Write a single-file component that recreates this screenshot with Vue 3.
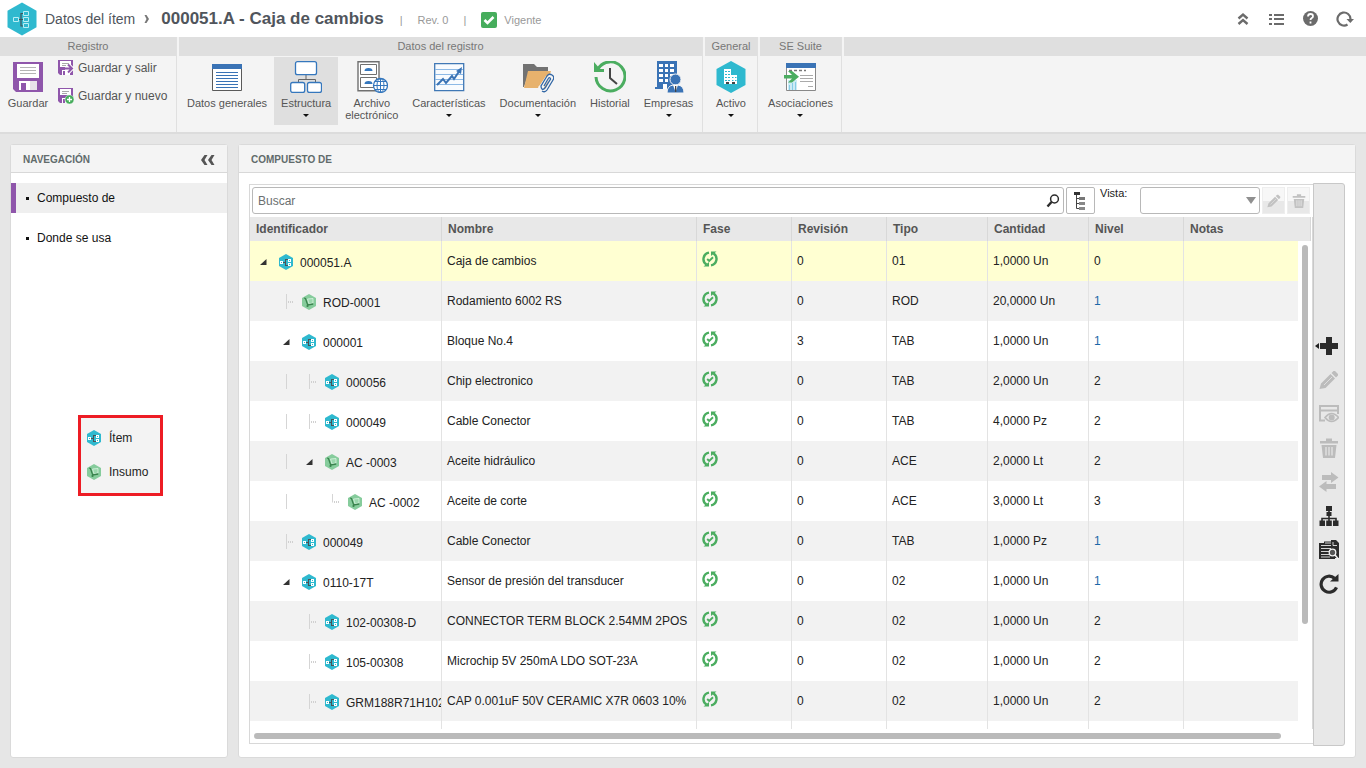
<script setup>
import { ref } from 'vue'

const sections = [
  {
    id: 'datos',
    title: 'Datos del registro',
    items: [
      { icon: 'form', label: 'Datos generales' },
      { icon: 'structure', label: 'Estructura', menu: true, active: true },
      { icon: 'cabinet', label: 'Archivo electrónico', narrow: true },
      { icon: 'chart', label: 'Características', menu: true },
      { icon: 'folder', label: 'Documentación', menu: true },
      { icon: 'history', label: 'Historial' },
      { icon: 'company', label: 'Empresas', menu: true }
    ]
  },
  { id: 'general', title: 'General', items: [{ icon: 'asset', label: 'Activo', menu: true }] },
  { id: 'suite', title: 'SE Suite', items: [{ icon: 'link', label: 'Asociaciones', menu: true }] }
]

const columns = ['Identificador', 'Nombre', 'Fase', 'Revisión', 'Tipo', 'Cantidad', 'Nivel', 'Notas']

const rows = [
  { tree: ['open'], kind: 'item', id: '000051.A', name: 'Caja de cambios', rev: '0', type: '01', qty: '1,0000 Un', level: '0', selected: true },
  { tree: ['none', 'tee'], kind: 'supply', id: 'ROD-0001', name: 'Rodamiento 6002 RS', rev: '0', type: 'ROD', qty: '20,0000 Un', level: '1' },
  { tree: ['none', 'open'], kind: 'item', id: '000001', name: 'Bloque No.4', rev: '3', type: 'TAB', qty: '1,0000 Un', level: '1' },
  { tree: ['none', 'line', 'tee'], kind: 'item', id: '000056', name: 'Chip electronico', rev: '0', type: 'TAB', qty: '2,0000 Un', level: '2' },
  { tree: ['none', 'line', 'tee'], kind: 'item', id: '000049', name: 'Cable Conector', rev: '0', type: 'TAB', qty: '4,0000 Pz', level: '2' },
  { tree: ['none', 'line', 'open'], kind: 'supply', id: 'AC -0003', name: 'Aceite hidráulico', rev: '0', type: 'ACE', qty: '2,0000 Lt', level: '2' },
  { tree: ['none', 'line', 'none', 'elbow'], kind: 'supply', id: 'AC -0002', name: 'Aceite de corte', rev: '0', type: 'ACE', qty: '3,0000 Lt', level: '3' },
  { tree: ['none', 'tee'], kind: 'item', id: '000049', name: 'Cable Conector', rev: '0', type: 'TAB', qty: '1,0000 Pz', level: '1' },
  { tree: ['none', 'open'], kind: 'item', id: '0110-17T', name: 'Sensor de presión del transducer', rev: '0', type: '02', qty: '1,0000 Un', level: '1' },
  { tree: ['none', 'none', 'tee'], kind: 'item', id: '102-00308-D', name: 'CONNECTOR TERM BLOCK 2.54MM 2POS', rev: '0', type: '02', qty: '1,0000 Un', level: '2' },
  { tree: ['none', 'none', 'tee'], kind: 'item', id: '105-00308', name: 'Microchip 5V 250mA LDO SOT-23A', rev: '0', type: '02', qty: '1,0000 Un', level: '2' },
  { tree: ['none', 'none', 'tee'], kind: 'item', id: 'GRM188R71H102', name: 'CAP 0.001uF 50V CERAMIC X7R 0603 10%', rev: '0', type: '02', qty: '1,0000 Un', level: '2' }
]

const tools = [
  { icon: 'plus', label: 'Agregar', menu: true },
  { icon: 'pencil', label: 'Editar', off: true },
  { icon: 'view', label: 'Visualizar', off: true },
  { icon: 'trash', label: 'Eliminar', off: true },
  { icon: 'swap', label: 'Reemplazar', off: true },
  { icon: 'org', label: 'Organigrama' },
  { icon: 'report', label: 'Informe' },
  { icon: 'reload', label: 'Actualizar' }
]

const search = ref('')
const view = ref('')
</script>

<template>
  <div class="page">
    <svg class="sprite" width="0" height="0" aria-hidden="true">
      <symbol id="item-big" viewBox="0 0 30 34">
        <path d="M15 0.5 29.5 8.8V25.2L15 33.500 0.5 25.200V8.800Z" fill="#2fb9cf" />
        <path d="M12 17.500h4M16.500 11.500H14v12.500h2.500" fill="none" stroke="#41545b" stroke-width="1.200" />
        <path d="M6.500 15.500h5v4h-5zM16.500 9.500h5v4h-5zM16.500 15.500h5v4h-5zM16.500 21.500h5v4h-5z" fill="none" stroke="#b9eef5" />
      </symbol>
      <symbol id="item" viewBox="0 0 16 16">
        <path d="M8 0 15 4V12L8 16 1 12V4Z" fill="#2fb9cf" />
        <path d="M5 8h2v1H5zM7 5h3v1H8v5h2v1H7z" fill="#4a5156" />
        <path d="M2 7h3v3H2zM10 5h3v3h-3zM10 9h3v3h-3z" fill="#fff" />
        <path d="M3 8h1v1H3zM11 6h1v1h-1zM11 10h1v1h-1z" fill="#2fb9cf" />
      </symbol>
      <symbol id="supply" viewBox="0 0 16 16">
        <path d="M8 0 15 4V12L8 16 1 12V4Z" fill="#86cc9c" />
        <path d="M6.500 5 12 4.500v4.500L8 9.800Z" fill="#9ad8ad" stroke="#daf3e1" stroke-width=".8" />
        <path d="M3 4 4.500 4.500l2.200 6.500 5.500-1" fill="none" stroke="#39834d" stroke-width="1.300" />
        <circle cx="6.500" cy="12" r="1.100" fill="#39834d" />
      </symbol>
      <symbol id="save" viewBox="0 0 30 30">
        <path d="M0 0h30v30H3l-3-3z" fill="#8f56ab" />
        <path d="M4 2h22v14H4zM6 19h18v9H6z" fill="#fff" />
        <path d="M7 5.500h16M7 8.500h16M7 11.500h16" stroke="#b5b5b5" />
        <path d="M8 21h5v7H8z" fill="#8f56ab" />
        <path d="M17 19h7v9h-7z" fill="#e8e3ea" />
      </symbol>
      <symbol id="save-exit" viewBox="0 0 16 16">
        <path d="M0 0h15v15H2l-2-2z" fill="#8f56ab" />
        <path d="M2 1h11v6H2zM4 10h8v5H4z" fill="#fff" />
        <path d="M4 3.500h7M4 5.500h4" stroke="#aaa" />
        <path d="M5 11h2v4H5z" fill="#8f56ab" />
        <path d="M7 8.500h6M10 4.500l4 4-4 4" fill="none" stroke="#fff" stroke-width="4" />
        <path d="M7 8.500h6M10 4.500l4 4-4 4" fill="none" stroke="#8f56ab" stroke-width="2" />
      </symbol>
      <symbol id="save-new" viewBox="0 0 16 16">
        <path d="M0 0h15v15H2l-2-2z" fill="#8f56ab" />
        <path d="M2 1h11v6H2zM4 10h8v5H4z" fill="#fff" />
        <path d="M4 3.500h7M4 5.500h5" stroke="#aaa" />
        <path d="M5 11h2v4H5z" fill="#8f56ab" />
        <circle cx="11.500" cy="11.500" r="4.500" fill="#46ad5c" stroke="#e8f6eb" stroke-width=".5" />
        <path d="M9 11.500h5M11.500 9v5" stroke="#fff" stroke-width="1.300" />
      </symbol>
      <symbol id="form" viewBox="0 0 32 32">
        <path d="M1.500 3.500h29v26h-29z" fill="#fff" stroke="#5a5a5a" />
        <path d="M1 3h30v5H1z" fill="#3a73b5" />
        <path d="M5 11.500h22M5 14.500h22M5 17.500h22M5 20.500h22M5 23.500h22M5 26.500h22" stroke="#3a73b5" />
      </symbol>
      <symbol id="structure" viewBox="0 0 32 32">
        <path d="M16 13v5M8.500 21v-2.500h17V21" fill="none" stroke="#666" />
        <g fill="#fff" stroke="#3577bd" stroke-width="1.300"><rect x="5.500" y=".7" width="21" height="13" rx="2" /><rect x=".7" y="21.500" width="14" height="10" rx="2" /><rect x="17.500" y="21.500" width="14" height="10" rx="2" /></g>
      </symbol>
      <symbol id="cabinet" viewBox="0 0 32 32">
        <g fill="#fff" stroke="#707070"><path d="M2 .8h21v29H2z" stroke-width="1.400" /><path d="M4.500 3.500h16v10h-16zM4.500 16.500h16v10h-16z" /></g>
        <path d="M8.500 10q0-3 4-3t4 3zM8.500 23q0-3 4-3t4 3z" fill="#3577bd" />
        <circle cx="24.500" cy="24.500" r="7" fill="#fff" stroke="#3577bd" stroke-width="1.300" />
        <path d="M17.500 24.500h14M24.500 17.500v14M19 20.500h11M19 28.500h11" stroke="#3577bd" />
        <ellipse cx="24.500" cy="24.500" rx="3.500" ry="7" fill="none" stroke="#3577bd" />
      </symbol>
      <symbol id="chart" viewBox="0 0 32 32">
        <path d="M1.700 2.700h29v27h-29z" fill="#f8fbfe" stroke="#4078b5" stroke-width="1.300" />
        <path d="M2 8.500h28M2 13.500h28M2 18.500h28M2 23.500h28" stroke="#8cb9e6" />
        <path d="m4 24 6-6 3 4 6-7 2 3 6-9" fill="none" stroke="#3a73b5" stroke-width="2" />
        <path d="m29 6-1 7-5-3z" fill="#3a73b5" />
      </symbol>
      <symbol id="folder" viewBox="0 0 32 32">
        <path d="M1 3h11l3 3h11v5H7L2 26H1z" fill="#727272" />
        <path d="M6 10h23l-5 17H2z" fill="#e7b26d" />
        <g fill="none" stroke="#f5f5f5" stroke-width="3"><path d="m20 27 6-10q3-4 5-1t-1 5l-5 8q-3 4-6 1t0-5l6-9" /></g>
        <path d="m22 25 4-7q1-2 2-1t0 2l-5 8q-2 2-3 1t-1-3l6-10q2-3 5-1t1 5l-6 10q-2 3-5 1" fill="none" stroke="#3267a5" stroke-width="1.300" />
      </symbol>
      <symbol id="history" viewBox="0 0 32 32">
        <path d="M4 8a14.500 14.500 0 1 1-2 8" fill="none" stroke="#4bad60" stroke-width="3" />
        <path d="M0 1v10h10v-3H6z" fill="#4bad60" />
        <path d="M16 7v10l7 6" fill="none" stroke="#454545" stroke-width="2" />
      </symbol>
      <symbol id="company" viewBox="0 0 32 32">
        <path d="M4 0h20v28H2v-2h2z" fill="#3a73b5" />
        <path d="M6 3h4v3H6zm6 0h3v3h-3zm5 0h4v3h-4zM6 8h4v3H6zm6 0h3v3h-3zm5 0h4v3h-4zM6 13h4v3H6zm6 0h3v3h-3zm5 0h4v2h-4zM6 18h4v3H6zm6 0h3v3h-3zM10 23h4v5h-4z" fill="#fff" />
        <circle cx="22.500" cy="18.500" r="5.500" fill="#3a73b5" stroke="#f4f4f4" />
        <path d="M14 32q0-7 6-8h5q6 1 6 8z" fill="#3a73b5" stroke="#f4f4f4" />
        <path d="m20 24 2.500 7 2.500-7z" fill="#fff" /><path d="M22 25h1.300v6H22z" fill="#444" />
      </symbol>
      <symbol id="asset" viewBox="0 0 32 32">
        <path d="M16 0 30.500 8V24L16 32 1.500 24V8Z" fill="#2fb9cf" />
        <path d="M9 8h7v6h6v9H9z" fill="#fff" />
        <path d="M10 10h2v1h-2zm3 0h2v1h-2zM10 13h2v1h-2zm3 0h2v1h-2zM10 16h2v1h-2zm3 0h2v1h-2zm4 0h1.500v1H17zm3 0h1.500v1H20zM10 19h2v1h-2zm3 0h2v1h-2zm4 0h1.500v1H17zm3 0h1.500v1H20z" fill="#2fb9cf" />
        <path d="M11 21h3v2h-3zm6 0h3v2h-3z" fill="#444" />
      </symbol>
      <symbol id="link" viewBox="0 0 32 32">
        <path d="M2.500 2.500h29v27h-29z" fill="#fff" stroke="#888" />
        <path d="M2 2h30v5H2z" fill="#3a73b5" />
        <path d="M5 9.500h17" stroke="#777" stroke-width="1.500" stroke-dasharray="3 2" />
        <path d="M4 19h9v10H4z" fill="#ccebf5" /><path d="M5.500 29v-5M8.500 29v-7M11.500 29v-8" stroke="#86cce6" />
        <path d="M16 14.500h13M16 17.500h13M16 20.500h13M24 25.500h5" stroke="#aaa" />
        <path d="M0 14h8l-4-4h4l7 5.700-7 5.800H4l4-4H0z" fill="#4bad60" />
      </symbol>
      <symbol id="fase" viewBox="0 0 16 16">
        <path d="M7 1.600A6.500 6.500 0 0 0 4.500 13.500M9 14.400A6.500 6.500 0 0 0 11.500 2.500" fill="none" stroke="#4bad60" stroke-width="2.400" />
        <path d="M1.500 15.500H7V11zM14.500 .5H9V5z" fill="#4bad60" />
        <path d="m5.200 8 2 1.900L11 6.200" fill="none" stroke="#4bad60" stroke-width="1.900" />
      </symbol>
      <symbol id="check" viewBox="0 0 16 16">
        <rect width="16" height="16" rx="2" fill="#46ad5c" /><path d="m3.500 8 3 3 6-6" fill="none" stroke="#fff" stroke-width="2.600" />
      </symbol>
      <symbol id="collapse" viewBox="0 0 18 18"><path d="m4.500 8.500 4.500-4 4.500 4M4.500 14 9 10l4.500 4" fill="none" stroke="currentColor" stroke-width="2.400" /></symbol>
      <symbol id="list" viewBox="0 0 18 18"><path d="M1 5h3M1 9h3M1 14h3M6 5h10M6 9h10M6 14h10" stroke="currentColor" stroke-width="2" /></symbol>
      <symbol id="help" viewBox="0 0 18 18"><circle cx="8.500" cy="8.500" r="7.500" fill="currentColor" /><path d="M6 6.500q0-2.500 2.500-2.500T11 6.200q0 1.400-1.500 2-1 .6-1 1.800M8.500 11.500v2" fill="none" stroke="#fff" stroke-width="1.800" /></symbol>
      <symbol id="refresh" viewBox="0 0 18 18"><path d="M11.500 14.500A6.500 6.500 0 1 1 14.500 9" fill="none" stroke="currentColor" stroke-width="2.200" /><path d="M10.500 9H18l-3.700 4z" fill="currentColor" /></symbol>
      <symbol id="back" viewBox="0 0 14 12"><path d="M6.500 1H3.500L0 6l3.500 5h3l-3-5zM13.500 1h-3L7 6l3.500 5h3l-3-5z" fill="#555" /></symbol>
      <symbol id="magnifier" viewBox="0 0 14 14"><circle cx="8.500" cy="5" r="3.900" fill="none" stroke="#2b2b2b" stroke-width="1.500" /><path d="m5.500 8-4 4.500" stroke="#2b2b2b" stroke-width="2.400" /></symbol>
      <symbol id="tree" viewBox="0 0 14 20">
        <path d="M2.500 3v14.500H6M2.500 7.500H6M2.500 12.500H6" fill="none" stroke="#444" />
        <path d="M0 1h6v3H0z" fill="#333" /><path d="M5 6h6v3H5z" fill="#777" /><path d="M5 11h6v3H5zM5 16h6v3H5z" fill="#888" />
      </symbol>
      <symbol id="plus" viewBox="0 0 20 20"><path d="M7 1h6v6h6v6h-6v6H7v-6H1V7h6z" fill="currentColor" /></symbol>
      <symbol id="pencil" viewBox="0 0 20 20"><path d="m.5 19 1.500-5.500L11.500 4l4.500 4.500L6.500 18zM12.500 3l2-2h1.500L19 4v1.500l-2 2z" fill="currentColor" /><path d="m5 15 8-8" stroke="#fff" stroke-opacity=".5" /></symbol>
      <symbol id="view" viewBox="0 0 20 20"><path d="M6 16.500H1V2h18v8M1 6.500h18" fill="none" stroke="currentColor" stroke-width="2" /><path d="M6 13.500q6.500-8 13.500 0-7 8-13.500 0z" fill="#e8e8e8" stroke="currentColor" stroke-width="1.700" /><circle cx="12.700" cy="13.500" r="3" fill="currentColor" /></symbol>
      <symbol id="trash" viewBox="0 0 20 20"><path d="M1 3h6V.5h6V3h6v2.500H1zM2.500 7h15L16 20H4z" fill="currentColor" /><path d="M7 9v8.500M10 9v8.500M13 9v8.500" stroke="#e8e8e8" stroke-width="1.200" /></symbol>
      <symbol id="swap" viewBox="0 0 20 20"><path d="M3 3h9V0l7.500 5.500L12 11V8H3zM17 12H7.500V9L0 14.500 7.500 20v-3H17z" fill="currentColor" /></symbol>
      <symbol id="org" viewBox="0 0 20 20"><path d="M7 0h6v5H7zM7.500 6h5v4h-5zM.5 14.500H6V20H.5zM7.200 14.500h5.600V20H7.200zM14 14.500h5.500V20H14z" fill="currentColor" /><path d="M10 4v11M3 15v-2.500h14V15" fill="none" stroke="currentColor" stroke-width="1.600" /></symbol>
      <symbol id="report" viewBox="0 0 20 20">
        <path d="M0 3h5V1.500h7V0h5l3 3v15h-4v1H0z" fill="currentColor" />
        <path d="M2 5.500h10M2 8.500h10M2 11.500h8M2 14.500h8M2 17h9M14 2v3.500h4M6 3h6" fill="none" stroke="#e8e8e8" stroke-width=".9" />
        <circle cx="13.500" cy="12.500" r="3.300" fill="#555" stroke="#f4f4f4" stroke-width="1.300" /><path d="m16 15 3.500 4" stroke="#f4f4f4" stroke-width="1.500" />
      </symbol>
      <symbol id="reload" viewBox="0 0 20 20"><path d="M15.500 4.300a8 8 0 1 0 2 9" fill="none" stroke="currentColor" stroke-width="3.200" /><path d="M11 7.500h8.500V0z" fill="currentColor" /></symbol>
    </svg>

    <header class="topbar">
      <svg class="logo"><use href="#item-big" /></svg>
      <a class="crumb" href="#">Datos del ítem</a>
      <svg class="sep" viewBox="0 0 8 10"><path d="M1.500 1H3.500L6 5 3.500 9H1.500L3.500 5z" fill="#777" /></svg>
      <h1 class="title">000051.A - Caja de cambios</h1>
      <div class="meta">
        <span>|</span><span>Rev. 0</span><span>|</span>
        <span class="status"><svg class="i16"><use href="#check" /></svg>Vigente</span>
      </div>
      <div class="actions">
        <button v-for="a in ['collapse', 'list', 'help', 'refresh']" :key="a" type="button" :aria-label="a">
          <svg class="i18"><use :href="'#' + a" /></svg>
        </button>
      </div>
    </header>

    <div class="ribbon">
      <section class="group record">
        <h2>Registro</h2>
        <div class="tiles">
          <button class="tile" type="button">
            <svg class="i32 save"><use href="#save" /></svg><span>Guardar</span>
          </button>
          <div class="stack">
            <button type="button"><svg class="i16"><use href="#save-exit" /></svg>Guardar y salir</button>
            <button type="button"><svg class="i16"><use href="#save-new" /></svg>Guardar y nuevo</button>
          </div>
        </div>
      </section>
      <section v-for="s in sections" :key="s.id" class="group" :class="s.id">
        <h2>{{ s.title }}</h2>
        <div class="tiles">
          <button v-for="t in s.items" :key="t.label" class="tile" :class="{ active: t.active, narrow: t.narrow }" type="button">
            <svg class="i32"><use :href="'#' + t.icon" /></svg>
            <span>{{ t.label }}</span>
            <i v-if="t.menu" class="caret"></i>
          </button>
        </div>
      </section>
      <div class="group rest"><div class="fill"></div></div>
    </div>

    <main class="work">
      <aside class="panel side">
        <div class="head">
          <h2>NAVEGACIÓN</h2>
          <button type="button" aria-label="Contraer"><svg class="back"><use href="#back" /></svg></button>
        </div>
        <nav>
          <a class="current" href="#">Compuesto de</a>
          <a href="#">Donde se usa</a>
        </nav>
        <div class="legend">
          <span><svg class="i16"><use href="#item" /></svg>Ítem</span>
          <span><svg class="i16"><use href="#supply" /></svg>Insumo</span>
        </div>
      </aside>

      <section class="panel content">
        <div class="head"><h2>COMPUESTO DE</h2></div>
        <div class="body">
          <div class="box">
            <form class="filters" @submit.prevent>
              <div class="search">
                <input v-model="search" type="text" placeholder="Buscar" aria-label="Buscar" />
                <button type="submit" aria-label="Buscar"><svg class="i14"><use href="#magnifier" /></svg></button>
              </div>
              <button class="square" type="button" aria-label="Árbol"><svg class="tree"><use href="#tree" /></svg></button>
              <label for="vista">Vista:</label>
              <div class="pick">
                <select id="vista" v-model="view"><option value=""></option></select>
                <i></i>
              </div>
              <button class="ghost" type="button" disabled aria-label="Editar vista"><svg class="i14"><use href="#pencil" /></svg></button>
              <button class="ghost" type="button" disabled aria-label="Eliminar vista"><svg class="i14"><use href="#trash" /></svg></button>
            </form>

            <div class="grid">
              <table>
                <colgroup>
                  <col class="c-id" /><col class="c-name" /><col class="c-s" /><col class="c-s" />
                  <col class="c-m" /><col class="c-m" /><col class="c-s" /><col />
                </colgroup>
                <thead>
                  <tr><th v-for="c in columns" :key="c" scope="col">{{ c }}</th></tr>
                </thead>
                <tbody>
                  <tr v-for="(r, n) in rows" :key="n" :class="{ selected: r.selected }">
                    <td class="id">
                      <div class="node">
                        <svg v-for="(k, i) in r.tree" :key="i" class="slot" viewBox="0 0 23 16">
                          <path v-if="k === 'open'" d="M14.500 5v6H8z" fill="#333" />
                          <path v-if="k === 'line' || k === 'tee'" d="M11.500 0v15" stroke="#d5d5d5" />
                          <path v-if="k === 'tee'" d="M13 8h6" stroke="#d0d0d0" stroke-width="2" stroke-dasharray="1 1" />
                          <path v-if="k === 'elbow'" d="M11.500 0v8.500" stroke="#d5d5d5" />
                          <path v-if="k === 'elbow'" d="M13 8h6" stroke="#d0d0d0" stroke-width="2" stroke-dasharray="1 1" />
                        </svg>
                        <svg class="i16"><use :href="'#' + r.kind" /></svg>
                        <span>{{ r.id }}</span>
                      </div>
                    </td>
                    <td>{{ r.name }}</td>
                    <td class="fase"><svg class="i16"><use href="#fase" /></svg></td>
                    <td>{{ r.rev }}</td>
                    <td>{{ r.type }}</td>
                    <td>{{ r.qty }}</td>
                    <td :class="{ blue: r.level === '1' }">{{ r.level }}</td>
                    <td></td>
                  </tr>
                </tbody>
                <tfoot><tr><td v-for="c in columns" :key="c"></td></tr></tfoot>
              </table>
              <div class="gutter"><div class="cap"></div><div class="rail"><div class="thumb"></div></div></div>
            </div>
            <div class="hbar"></div>
          </div>

          <div class="tools">
            <button v-for="t in tools" :key="t.icon" type="button" :aria-label="t.label" :disabled="t.off">
              <svg v-if="t.menu" class="left" viewBox="0 0 4 6"><path d="M4 0v6L0 3z" fill="#222" /></svg>
              <svg class="i20"><use :href="'#' + t.icon" /></svg>
            </button>
          </div>
        </div>
      </section>
    </main>
  </div>
</template>

<style>
body { background: #e6e6e6; }
</style>

<style scoped>
.page { min-height: 100vh; display: flex; flex-direction: column; background: #e6e6e6; font: 12px/16px "Liberation Sans", Arial, sans-serif; color: #222; }
.page, .page *, .page *::before { box-sizing: border-box; }
.sprite { position: absolute; }
svg { display: block; flex: none; }
h1, h2 { margin: 0; }
button { padding: 0; border: 0; background: none; font: inherit; color: inherit; display: flex; align-items: center; justify-content: center; }
a { color: inherit; text-decoration: none; }
.i14 { width: 14px; height: 14px; }
.i16 { width: 16px; height: 16px; }
.i18 { width: 18px; height: 18px; }
.i20 { width: 20px; height: 20px; }
.i32 { width: 32px; height: 32px; }

.topbar { height: 37px; display: flex; align-items: center; padding: 0 12px 0 7px; background: #fff; color: #50555c; }
.logo { width: 30px; height: 34px; }
.crumb { margin-left: 8px; font-size: 14px; }
.sep { width: 8px; height: 10px; margin: 0 10px 0 8px; }
.title { font-size: 17px; line-height: 20px; white-space: nowrap; }
.meta { display: flex; align-items: center; gap: 15px; margin-left: 16px; padding-top: 3px; font-size: 11px; color: #999; }
.status { display: flex; align-items: center; gap: 7px; }
.actions { display: flex; gap: 16px; margin-left: auto; color: #6b6b6b; }

.ribbon { display: flex; height: 97px; background: #f4f4f4; border-bottom: 2px solid #dcdcdc; color: #555; }
.group { margin-right: 2px; border-right: 1px solid #e0e0e0; }
.group h2 { height: 19px; background: #dfdfdf; font-size: 11px; font-weight: 400; line-height: 19px; text-align: center; color: #777; }
.tiles { display: flex; justify-content: center; padding-top: 1px; }
.record { width: 177px; }
.record .tiles { justify-content: flex-start; }
.record .tile { width: 56px; }
.datos { width: 524px; }
.datos .tiles { justify-content: flex-start; padding-left: 1px; }
.general { width: 53px; }
.suite { width: 82px; }
.rest { flex: 1; margin: 0; border: 0; }
.fill { height: 19px; background: #dfdfdf; }
.tile { height: 68px; flex-direction: column; justify-content: flex-start; padding: 4px 7px 0; font-size: 11px; line-height: 12px; }
.tile span { margin-top: 4px; white-space: nowrap; }
.narrow { width: 67px; }
.narrow span { white-space: normal; }
.active { background: #dfdfdf; }
.save { padding: 1px; }
.caret { margin-top: 5px; border: 3px solid transparent; border-top-color: #111; border-bottom: 0; }
.stack { display: flex; flex-direction: column; gap: 12px; padding: 3px 0 0 2px; }
.stack button { justify-content: flex-start; gap: 4px; }

.work { flex: 1; display: flex; gap: 10px; padding: 10px; }
.panel { display: flex; flex-direction: column; background: #fff; border: 1px solid #dadada; border-radius: 3px; }
.side { position: relative; width: 218px; flex: none; }
.content { flex: 1; min-width: 0; }
.head { display: flex; align-items: center; justify-content: space-between; height: 28px; padding: 2px 12px 0; background: #f4f4f4; border-bottom: 1px solid #d8d8d8; }
.head h2 { font-size: 10px; color: #616b6b; }
.back { width: 14px; height: 12px; }
nav { display: flex; flex-direction: column; gap: 10px; padding-top: 10px; color: #111; }
nav a { display: flex; align-items: center; gap: 8px; height: 30px; padding-left: 10px; border-left: 5px solid transparent; }
nav a::before { content: ""; width: 3px; height: 3px; background: #111; }
nav .current { background: #efefef; border-color: #8f56ab; }
.legend { position: absolute; left: 67px; top: 270px; display: flex; flex-direction: column; gap: 16px; width: 85px; padding: 11px 5px 12px; border: 3px solid #ed1c24; background: #f3f3f3; color: #222; }
.legend span { display: flex; align-items: center; gap: 7px; }

.body { flex: 1; display: flex; padding: 10px 10px 11px; }
.box { flex: 1; min-width: 0; margin: 1px 0 2px; border: 1px solid #d8d8d8; border-right: 0; }
.filters { display: flex; gap: 2px; height: 32px; padding: 2px 3px 3px 2px; }
.search { flex: 1; display: flex; align-items: center; height: 27px; padding-right: 3px; border: 1px solid #b8b8b8; border-radius: 3px; }
.search input { flex: 1; min-width: 0; border: 0; outline: 0; padding: 0 5px; background: none; font: inherit; color: #333; }
.search input::placeholder { color: #6b7070; opacity: 1; }
.square { width: 29px; height: 27px; border: 1px solid #b8b8b8; border-radius: 2px; }
.tree { width: 14px; height: 20px; }
.filters label { width: 38px; margin-left: 3px; font-size: 11px; line-height: 12px; }
.pick { position: relative; width: 120px; height: 27px; }
.pick select { width: 100%; height: 100%; appearance: none; border: 1px solid #b8b8b8; border-radius: 3px; background: #fff; font: inherit; }
.pick i { position: absolute; right: 4px; top: 10px; border: 5px solid transparent; border-top: 7px solid #909090; border-bottom: 0; pointer-events: none; }
.ghost { width: 23px; height: 27px; background: linear-gradient(#f7f7f7 50%, #e8e8e8 50%); border: 1px solid #eee; color: #c2c2c2; }

.grid { display: flex; }
table { flex: 1; width: 100%; min-width: 0; table-layout: fixed; border-collapse: separate; border-spacing: 0; }
.c-id { width: 192px; }
.c-name { width: 255px; }
.c-s { width: 95px; }
.c-m { width: 101px; }
th { height: 24px; padding: 0 6px; background: #e8e8e8; border-right: 1px solid #d8d8d8; text-align: left; color: #555; }
td { height: 40px; padding: 0 5px; border-right: 1px solid #e3e3e3; white-space: nowrap; overflow: hidden; }
th:last-child, td:last-child { border-right: 0; }
tbody tr:nth-child(even) td { background: #f2f2f2; }
tbody .selected td { background: #ffffd2; }
td.id { padding: 2px 0 0 2px; }
tfoot td { height: 8px; }
.node { display: flex; align-items: center; }
.node .i16 { margin: 0 6px 0 3px; }
.node span, .legend { line-height: 18px; }
.node span { padding-top: 1px; }
.slot { width: 23px; height: 16px; }
.fase { padding-bottom: 5px; }
.blue { color: #1b68a8; }
.gutter { width: 15px; flex: none; display: flex; flex-direction: column; border-right: 1px solid #d8d8d8; }
.cap { height: 24px; margin-right: 1px; background: #e8e8e8; border-right: 1px solid #d8d8d8; }
.rail { flex: 1; padding: 4px; }
.thumb { width: 6px; height: 79%; border-radius: 3px; background: #bababa; }
.hbar { height: 6px; margin: 4px 32px 4px 4px; border-radius: 3px; background: #bababa; }

.tools { width: 32px; display: flex; flex-direction: column; justify-content: center; background: #e8e8e8; border: 1px solid #c8c8c8; border-radius: 0 3px 3px 0; }
.tools button { position: relative; height: 34px; color: #2b2b2b; }
.tools button:disabled { color: #bcbcbc; }
.left { position: absolute; left: 1px; top: 14px; width: 4px; height: 6px; }
</style>
